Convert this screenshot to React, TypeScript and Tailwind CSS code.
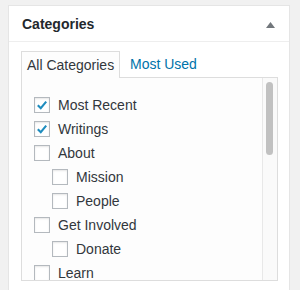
import React from "react";

type Cat = { name: string; checked?: boolean; child?: boolean };

const cats: Cat[] = [
  { name: "Most Recent", checked: true },
  { name: "Writings", checked: true },
  { name: "About" },
  { name: "Mission", child: true },
  { name: "People", child: true },
  { name: "Get Involved" },
  { name: "Donate", child: true },
  { name: "Learn" },
];

function Checkbox({ checked }: { checked?: boolean }) {
  return (
    <span className="flex h-4 w-4 shrink-0 items-center justify-center border border-[#b4b9be] bg-white shadow-[inset_0_1px_2px_rgba(0,0,0,0.1)]">
      {checked && (
        <svg width="14" height="14" viewBox="0 0 16 16">
          <path d="M3.2 8.2 L6.6 11.6 L12.8 4.2" fill="none" stroke="#1e8cbe" strokeWidth="2.4" />
        </svg>
      )}
    </span>
  );
}

export default function App() {
  return (
    <div className="h-[290px] w-[300px] overflow-hidden bg-[#f1f1f1] pt-[5px] pl-[8px] font-['Liberation_Sans',Arial,sans-serif]">
      <div className="h-[300px] w-[282px] border border-[#e5e5e5] bg-white">
        {/* header */}
        <div className="flex h-[36px] items-center justify-between border-b border-[#eeeeee] pl-[13px] pr-[14px] pt-[2px]">
          <h2 className="text-[14px] font-bold text-[#23282d]">Categories</h2>
          <svg width="9" height="6" viewBox="0 0 9 6">
            <path d="M0 6 L4.5 0 L9 6 Z" fill="#72777c" />
          </svg>
        </div>

        <div className="px-[12px] pt-[9px]">
          {/* tabs */}
          <div className="flex items-end">
            <div className="relative -mb-px flex h-[27px] w-[99px] items-center border border-b-0 border-[#dddddd] bg-[#fdfdfd] pl-[5px] text-[14px] text-[#32373c]">
              All Categories
            </div>
            <div className="flex h-[26px] items-center pl-[10px] text-[14px] text-[#0073aa]">Most Used</div>
          </div>

          {/* panel */}
          <div className="flex h-[204px] w-[257px] overflow-hidden border border-[#dddddd] bg-[#fdfdfd]">
            <ul className="flex-1 pl-[12px] pt-[15px]">
              {cats.map((c) => (
                <li
                  key={c.name}
                  className={
                    "flex h-[24px] items-center gap-[8px] text-[14px] text-[#32373c] " +
                    (c.child ? "pl-[18px]" : "")
                  }
                >
                  <Checkbox checked={c.checked} />
                  <span>{c.name}</span>
                </li>
              ))}
            </ul>
            <div className="w-[15px] shrink-0 border-l border-[#e8e8e8] bg-[#fafafa] pl-[3px] pt-[4px]">
              <div className="h-[73px] w-[7px] rounded-full bg-[#c1c1c1]" />
            </div>
          </div>
        </div>
      </div>
    </div>
  );
}
